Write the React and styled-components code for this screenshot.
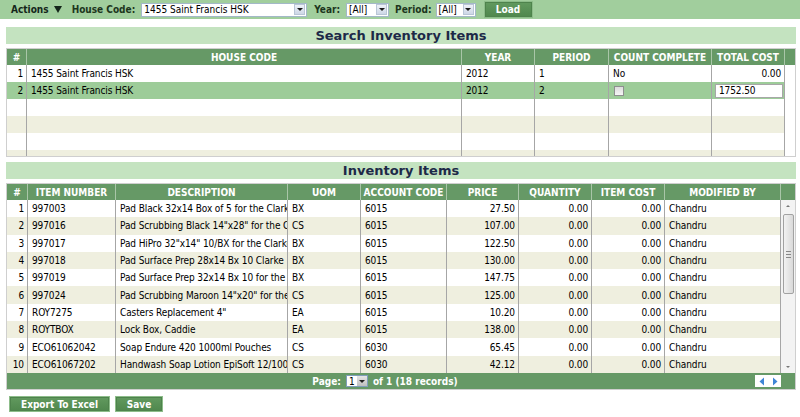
import React from "react";
import styled, { createGlobalStyle } from "styled-components";

const GlobalStyle = createGlobalStyle`
  body {
    margin: 0;
    background: #fff;
    font-family: "DejaVu Sans Condensed", "DejaVu Sans", sans-serif;
    font-stretch: condensed;
    font-size: 10px;
    color: #000;
  }
`;

const Toolbar = styled.div`
  height: 19px;
  background: #a1ce9d;
  display: flex;
  align-items: center;
  padding-left: 11px;
  color: #1d361d;
  font-weight: bold;
  font-size: 10px;
`;

const ActionsMenu = styled.div`
  display: flex;
  align-items: center;
  gap: 5px;
  color: #14261a;
  margin-right: 10px;
`;

const Label = styled.span`
  margin-right: ${p => p.$gap || 7}px;
`;

const Select = styled.div`
  width: ${p => p.$w}px;
  height: 14px;
  box-sizing: border-box;
  background: #fff;
  border: 1px solid #a3b8c8;
  display: flex;
  align-items: center;
  justify-content: space-between;
  padding-left: 2px;
  margin-right: ${p => p.$mr || 0}px;
  font-weight: normal;
  color: #000;
  font-size: 10px;
`;

const DropButton = styled.div`
  width: 11px;
  height: 11px;
  margin-right: 1px;
  box-sizing: border-box;
  border: 1px solid #b9c6d6;
  background: linear-gradient(#eef2f8, #cdd7e6);
  display: flex;
  align-items: center;
  justify-content: center;
  &::after {
    content: "";
    border-left: 3px solid transparent;
    border-right: 3px solid transparent;
    border-top: 3px solid #1a1a1a;
  }
`;

const GreenButton = styled.button`
  height: ${p => p.$h || 16}px;
  width: ${p => p.$w}px;
  padding: 0;
  border: 1px solid #8dbd8a;
  box-shadow: inset 0 0 0 1px #4e834c;
  background: linear-gradient(#629a5f, #4f874d);
  color: #fff;
  font-family: inherit;
  font-stretch: condensed;
  font-weight: bold;
  font-size: 10px;
  cursor: pointer;
`;

const Page = styled.div`
  padding: 0 4px 0 6px;
`;

const SectionTitle = styled.div`
  margin-top: ${p => p.$mt}px;
  height: 17px;
  background: #c4e3c0;
  display: flex;
  align-items: center;
  justify-content: center;
  font-family: "DejaVu Sans", sans-serif;
  font-stretch: normal;
  font-weight: bold;
  font-size: 13px;
  color: #1d2948;
`;

const Grid = styled.div`
  margin-top: 4px;
  border: 1px solid #cfcfcf;
  background: #fff;
`;

const HeaderRow = styled.div`
  display: grid;
  grid-template-columns: ${p => p.$cols};
  height: 16px;
  background: #669966;
  color: #fff;
  font-weight: bold;
  font-size: 10px;
`;

const HeaderCell = styled.div`
  display: flex;
  align-items: center;
  justify-content: center;
  border-right: 1px solid #a9c6a8;
  white-space: nowrap;
  overflow: hidden;
  &:last-child {
    border-right: none;
  }
`;

const Body = styled.div`
  display: flex;
  height: ${p => p.$h}px;
  overflow: hidden;
`;

const Rows = styled.div`
  display: flex;
  flex-direction: column;
`;

const rowBg = { odd: "#ffffff", even: "#efefdf", selected: "#9dcc99" };

const Row = styled.div`
  display: grid;
  grid-template-columns: ${p => p.$cols};
  flex: 0 0 ${p => p.$h}px;
  background: ${p => rowBg[p.$tone]};
`;

const Cell = styled.div`
  display: flex;
  align-items: center;
  justify-content: ${p => (p.$align === "right" ? "flex-end" : "flex-start")};
  padding: 0 ${p => (p.$align === "right" ? 3 : 0)}px 0 ${p => (p.$align === "right" ? 0 : 4)}px;
  border-right: 1px solid #a6a6a6;
  white-space: nowrap;
  overflow: hidden;
  min-width: 0;
  letter-spacing: -0.1px;
`;

const CheckBox = styled.span`
  width: 10px;
  height: 10px;
  box-sizing: border-box;
  border: 1px solid #8e8f8f;
  background: linear-gradient(#dcdcdc, #f6f6f6);
  margin-left: 1px;
`;

const TextInput = styled.div`
  width: 68px;
  height: 14px;
  box-sizing: border-box;
  border: 1px solid #a7a7a7;
  background: #fff;
  display: flex;
  align-items: center;
  padding-left: 3px;
  margin-left: -1px;
`;

const ScrollTrack = styled.div`
  width: 14px;
  display: flex;
  flex-direction: column;
  align-items: center;
  background: #f3f3f3;
`;

const ScrollArrow = styled.div`
  height: 12px;
  display: flex;
  align-items: center;
  justify-content: center;
  &::after {
    content: "";
    border-left: 2px solid transparent;
    border-right: 2px solid transparent;
    ${p => (p.$down ? "border-top" : "border-bottom")}: 2px solid #777;
  }
`;

const ScrollThumb = styled.div`
  width: 11px;
  height: 80px;
  margin-top: 2px;
  box-sizing: border-box;
  border: 1px solid #a2a2a2;
  border-radius: 2px;
  background: linear-gradient(90deg, #f2f2f2, #d9d9d9);
  display: flex;
  align-items: center;
  justify-content: center;
  &::after {
    content: "";
    width: 5px;
    height: 5px;
    border-top: 1px solid #888;
    border-bottom: 1px solid #888;
    background: linear-gradient(#888, #888) center / 5px 1px no-repeat;
  }
`;

const Spacer = styled.div`
  flex: 1;
`;

const Pager = styled.div`
  height: 16px;
  background: #669966;
  display: flex;
  align-items: center;
  color: #fff;
  font-weight: bold;
  font-size: 10px;
`;

const PagerCenter = styled.div`
  flex: 1;
  display: flex;
  align-items: center;
  justify-content: center;
  gap: 3px;
  padding-left: 8px;
`;

const PageSelect = styled.div`
  width: 22px;
  height: 12px;
  box-sizing: border-box;
  background: #fff;
  border: 1px solid #7f9db9;
  color: #000;
  font-weight: normal;
  display: flex;
  align-items: center;
  justify-content: space-between;
  padding-left: 2px;
  margin: 0 2px;
`;

const PageDrop = styled.span`
  width: 10px;
  height: 10px;
  background: linear-gradient(#e6e6e6, #bfbfbf);
  display: flex;
  align-items: center;
  justify-content: center;
  &::after {
    content: "";
    border-left: 3px solid transparent;
    border-right: 3px solid transparent;
    border-top: 3px solid #222;
  }
`;

const NavBox = styled.div`
  width: 26px;
  height: 12px;
  background: #fff;
  margin-right: 14px;
  display: flex;
  align-items: center;
  justify-content: space-around;
`;

const Footer = styled.div`
  display: flex;
  gap: 5px;
  margin: 6px 0 0 3px;
`;

const searchCols = [20, 435, 73, 74, 103, 73];
const invCols = [21, 88, 172, 73, 86, 72, 73, 73, 116];
const toCols = (ws, extra) => ws.map(w => `${w}px`).join(" ") + (extra ? ` ${extra}` : "");

const items = [
  ["1", "997003", "Pad Black 32x14 Box of 5 for the Clarke", "BX", "6015", "27.50"],
  ["2", "997016", 'Pad Scrubbing Black 14"x28" for the Clarke', "CS", "6015", "107.00"],
  ["3", "997017", 'Pad HiPro 32"x14" 10/BX for the Clarke', "BX", "6015", "122.50"],
  ["4", "997018", "Pad Surface Prep 28x14 Bx 10 Clarke", "BX", "6015", "130.00"],
  ["5", "997019", "Pad Surface Prep 32x14 Bx 10 for the Clarke", "BX", "6015", "147.75"],
  ["6", "997024", 'Pad Scrubbing Maroon 14"x20" for the Clarke', "CS", "6015", "125.00"],
  ["7", "ROY7275", 'Casters Replacement 4"', "EA", "6015", "10.20"],
  ["8", "ROYTBOX", "Lock Box, Caddie", "EA", "6015", "138.00"],
  ["9", "ECO61062042", "Soap Endure 420 1000ml Pouches", "CS", "6030", "65.45"],
  ["10", "ECO61067202", "Handwash Soap Lotion EpiSoft 12/1000ml", "CS", "6030", "42.12"],
];

function Dropdown({ w, mr, children }) {
  return (
    <Select $w={w} $mr={mr}>
      <span>{children}</span>
      <DropButton />
    </Select>
  );
}

function SearchGrid() {
  const cols = toCols(searchCols);
  return (
    <Grid>
      <HeaderRow $cols={toCols(searchCols, "1fr")}>
        {["#", "HOUSE CODE", "YEAR", "PERIOD", "COUNT COMPLETE", "TOTAL COST", ""].map((h, i) => (
          <HeaderCell key={i}>{h}</HeaderCell>
        ))}
      </HeaderRow>
      <Body $h={91}>
        <Rows>
          <Row $cols={cols} $h={17} $tone="odd">
            <Cell $align="right">1</Cell>
            <Cell>1455 Saint Francis HSK</Cell>
            <Cell>2012</Cell>
            <Cell>1</Cell>
            <Cell>No</Cell>
            <Cell $align="right">0.00</Cell>
          </Row>
          <Row $cols={cols} $h={17} $tone="selected">
            <Cell $align="right">2</Cell>
            <Cell>1455 Saint Francis HSK</Cell>
            <Cell>2012</Cell>
            <Cell>2</Cell>
            <Cell><CheckBox /></Cell>
            <Cell><TextInput>1752.50</TextInput></Cell>
          </Row>
          {[3, 4, 5, 6].map(n => (
            <Row key={n} $cols={cols} $h={17} $tone={n % 2 ? "odd" : "even"}>
              {searchCols.map((_, i) => <Cell key={i} />)}
            </Row>
          ))}
        </Rows>
      </Body>
    </Grid>
  );
}

function InventoryGrid() {
  const cols = toCols(invCols);
  const heads = ["#", "ITEM NUMBER", "DESCRIPTION", "UOM", "ACCOUNT CODE", "PRICE", "QUANTITY", "ITEM COST", "MODIFIED BY", ""];
  return (
    <Grid>
      <HeaderRow $cols={toCols(invCols, "1fr")}>
        {heads.map((h, i) => <HeaderCell key={i}>{h}</HeaderCell>)}
      </HeaderRow>
      <Body $h={173}>
        <Rows>
          {items.map(([n, num, desc, uom, acct, price]) => (
            <Row key={n} $cols={cols} $h={17.3} $tone={Number(n) % 2 ? "odd" : "even"}>
              <Cell $align="right">{n}</Cell>
              <Cell>{num}</Cell>
              <Cell>{desc}</Cell>
              <Cell>{uom}</Cell>
              <Cell>{acct}</Cell>
              <Cell $align="right">{price}</Cell>
              <Cell $align="right">0.00</Cell>
              <Cell $align="right">0.00</Cell>
              <Cell>Chandru</Cell>
            </Row>
          ))}
        </Rows>
        <ScrollTrack>
          <ScrollArrow />
          <ScrollThumb />
          <Spacer />
          <ScrollArrow $down />
        </ScrollTrack>
      </Body>
      <Pager>
        <PagerCenter>
          <span>Page:</span>
          <PageSelect>
            <span>1</span>
            <PageDrop />
          </PageSelect>
          <span>of 1 (18 records)</span>
        </PagerCenter>
        <NavBox>
          <svg width="6" height="9" viewBox="0 0 6 9">
            <path d="M5 0.5 L0.5 4.5 L5 8.5 Z" fill="#3f86d6" />
          </svg>
          <svg width="6" height="9" viewBox="0 0 6 9">
            <path d="M1 0.5 L5.5 4.5 L1 8.5 Z" fill="#3f86d6" />
          </svg>
        </NavBox>
      </Pager>
    </Grid>
  );
}

export default function App() {
  return (
    <>
      <GlobalStyle />
      <Toolbar>
        <ActionsMenu>
          <span>Actions</span>
          <svg width="8" height="7" viewBox="0 0 8 7">
            <path d="M0 0 H8 L4 7 Z" fill="#14261a" />
          </svg>
        </ActionsMenu>
        <Label $gap={6}>House Code:</Label>
        <Dropdown w={166} mr={7}>1455 Saint Francis HSK</Dropdown>
        <Label $gap={6}>Year:</Label>
        <Dropdown w={43} mr={6}>[All]</Dropdown>
        <Label $gap={4}>Period:</Label>
        <Dropdown w={40} mr={8}>[All]</Dropdown>
        <GreenButton $w={49} $h={17}>Load</GreenButton>
      </Toolbar>
      <Page>
        <SectionTitle $mt={8}>Search Inventory Items</SectionTitle>
        <SearchGrid />
        <SectionTitle $mt={5}>Inventory Items</SectionTitle>
        <InventoryGrid />
        <Footer>
          <GreenButton $w={101}>Export To Excel</GreenButton>
          <GreenButton $w={48}>Save</GreenButton>
        </Footer>
      </Page>
    </>
  );
}
